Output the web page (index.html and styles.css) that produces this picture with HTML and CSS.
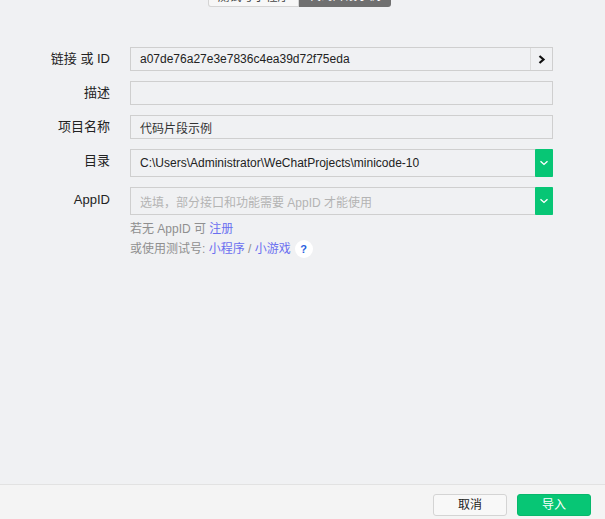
FILE: index.html
```html
<!DOCTYPE html>
<html lang="zh">
<head>
<meta charset="utf-8">
<title>导入</title>
<link rel="stylesheet" href="styles.css">
</head>
<body>
<div class="page">
  <div class="tabs-wrap">
    <div class="tabs">
      <div class="tab tab-light">测试号小程序</div>
      <div class="tab tab-dark">代码片段示例</div>
    </div>
  </div>
  <main class="form">
    <div class="row row-std">
      <label class="label">链接 或 ID</label>
      <div class="field">
        <span class="value">a07de76a27e3e7836c4ea39d72f75eda</span>
        <span class="go"><svg width="8" height="9" viewBox="0 0 8 9"><path d="M1.5 1 L5.5 4.5 L1.5 8" fill="none" stroke="#111" stroke-width="2.2"/></svg></span>
      </div>
    </div>
    <div class="row row-std">
      <label class="label">描述</label>
      <div class="field"></div>
    </div>
    <div class="row row-std">
      <label class="label">项目名称</label>
      <div class="field"><span class="value value-soft">代码片段示例</span></div>
    </div>
    <div class="row row-sel">
      <label class="label">目录</label>
      <div class="field field-sel">
        <span class="value">C:\Users\Administrator\WeChatProjects\minicode-10</span>
        <span class="drop"><svg width="10" height="6" viewBox="0 0 10 6"><path d="M1.5 1.2 L5 4.4 L8.5 1.2" fill="none" stroke="#fff" stroke-width="1.4"/></svg></span>
      </div>
    </div>
    <div class="row row-sel row-appid">
      <label class="label">AppID</label>
      <div class="field field-sel">
        <span class="value value-ph">选填，部分接口和功能需要 AppID 才能使用</span>
        <span class="drop"><svg width="10" height="6" viewBox="0 0 10 6"><path d="M1.5 1.2 L5 4.4 L8.5 1.2" fill="none" stroke="#fff" stroke-width="1.4"/></svg></span>
      </div>
    </div>
    <div class="hints">
      <div class="hint">若无 AppID 可 <a class="link">注册</a></div>
      <div class="hint">或使用测试号: <a class="link">小程序</a> / <a class="link">小游戏</a><span class="help">?</span></div>
    </div>
  </main>
  <footer class="footer">
    <button class="btn btn-cancel">取消</button>
    <button class="btn btn-ok">导入</button>
  </footer>
</div>
</body>
</html>
```
FILE: styles.css
```css
* { box-sizing: border-box; }
html, body { margin: 0; height: 100%; }
body {
  background: #f0f1f3;
  font-family: "Liberation Sans", "Noto Sans CJK SC", sans-serif;
  font-size: 12px;
  color: #1a1a1a;
  overflow: hidden;
}
.page { height: 519px; display: flex; flex-direction: column; }
.tabs-wrap { height: 47px; display: flex; padding-left: 208px; }
.tabs { display: flex; height: 7px; width: 183px; }
.tab {
  height: 7px; line-height: 12px; font-size: 12px; overflow: hidden; flex: none;
  display: flex; align-items: flex-end; justify-content: center; padding-bottom: 5px;
}
.tab-light { width: 91px; background: #f7f7f7; border: 1px solid #d4d4d4; border-top: 0; border-radius: 0 0 0 3px; color: #444; padding-bottom: 3px; }
.tab-dark { width: 92px; background: #707070; color: #fff; border-radius: 0 0 3px 0; }
.form { flex: 1; display: flex; flex-direction: column; padding-right: 52px; }
.row { display: flex; }
.row-std { height: 24px; margin-bottom: 10px; }
.row-sel { height: 28px; margin-bottom: 10px; }
.row-appid { margin-bottom: 5px; }
.label { width: 110px; text-align: right; flex: none; line-height: 24px; font-size: 13px; color: #222; }
.row-sel .label { line-height: 23px; }
.row-appid .label { line-height: 25px; }
.field {
  margin-left: 20px; flex: 1; display: flex; align-items: center; height: 100%;
  border: 1px solid #cfcfcf; min-width: 0;
}
.field-sel { border-right: 0; }
.value { flex: 1; padding-left: 9px; white-space: nowrap; overflow: hidden; font-size: 12px; color: #222; }
.value-soft { color: #333; }
.value-ph { color: #b4b4b4; }
.go {
  width: 22px; height: 100%; flex: none; border-left: 1px solid #dcdcdc;
  display: flex; align-items: center; justify-content: center;
}
.drop {
  width: 18px; height: 28px; margin: -1px 0; flex: none; background: #07c675; border-radius: 1px;
  display: flex; align-items: center; justify-content: center;
}
.hints { margin-left: 130px; font-size: 12px; color: #8f8f8f; }
.hint { height: 19px; line-height: 19px; display: flex; align-items: center; white-space: pre; }
.hint + .hint { padding-top: 1px; height: 20px; }
.link { color: #6a6ff0; }
.help {
  width: 18px; height: 18px; border-radius: 50%; background: #fff; margin-left: 4px; margin-top: -1px;
  color: #2a5fe0; font-weight: bold; font-size: 11px; text-align: center; line-height: 18px;
}
.footer {
  height: 35px; background: #f4f4f4; border-top: 1px solid #e2e2e2;
  display: flex; justify-content: flex-end; align-items: flex-start; gap: 10px;
  padding: 9px 14px 0 0;
}
.btn {
  width: 74px; height: 22px; padding: 0; font-family: inherit; font-size: 12px; border-radius: 3px;
  line-height: 20px;
}
.btn-cancel { background: #f8f8f8; border: 1px solid #d4d4d4; color: #222; }
.btn-ok { background: #07c675; border: 1px solid #07b86c; color: #fff; }
```
